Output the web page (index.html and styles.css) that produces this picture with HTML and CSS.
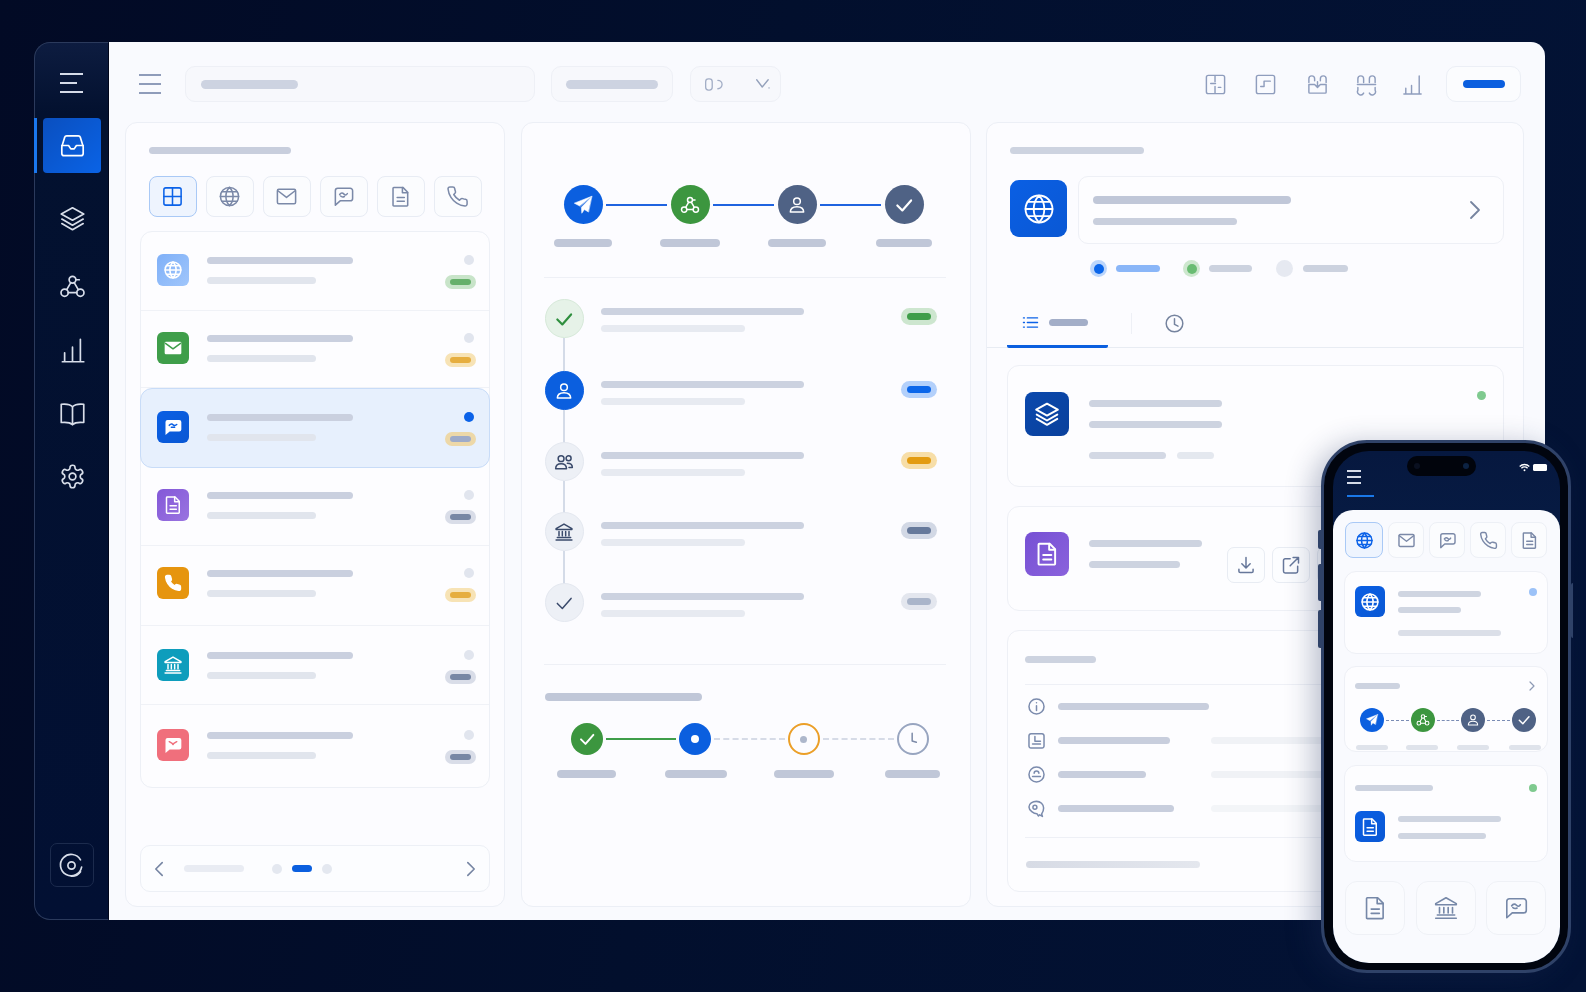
FILE: index.html
```html
<!DOCTYPE html>
<html lang="en">
<head>
  <meta charset="UTF-8" />
  <meta name="viewport" content="width=device-width, initial-scale=1.0" />
  <title>Inbox</title>
  <link rel="stylesheet" href="styles.css">
</head>
<body>

<svg class="sprite" xmlns="http://www.w3.org/2000/svg">
  <symbol id="i-inbox" viewBox="0 0 24 24"><path d="M2.500 13 5 4.800A2 2 0 0 1 7 3.500h10a2 2 0 0 1 2 1.300l2.500 8.200V19a2 2 0 0 1-2 2h-15a2 2 0 0 1-2-2z"/><path d="M2.500 12h6l2 3h3l2-3h6"/></symbol>
  <symbol id="i-layers" viewBox="0 0 24 24"><path d="M12 2.500 22 8l-10 5.500L2 8z"/><path d="M2.500 12.500 12 18l9.500-5.500"/><path d="M2.500 16.500 12 22l9.500-5.500"/></symbol>
  <symbol id="i-network" viewBox="0 0 24 24"><circle cx="12" cy="6" r="3"/><circle cx="5" cy="17.500" r="3.200"/><circle cx="19" cy="17.500" r="3.200"/><path d="M10.500 8.500 7 14.500M13.500 8.500l3.500 6M8.200 17.500h7.600M15 6h3"/></symbol>
  <symbol id="i-bars" viewBox="0 0 24 24"><path d="M3 22h19M5 22v-8M12 22V9M19 22V2"/></symbol>
  <symbol id="i-book" viewBox="0 0 24 24"><path d="M12 6C10 4 6.500 3.300 2 3.800V20c4.500-.5 8 .1 10 1.800 2-1.700 5.500-2.300 10-1.800V3.800C17.500 3.300 14 4 12 6z"/><path d="M12 6v15.800"/></symbol>
  <symbol id="i-gear" viewBox="0 0 24 24"><path d="M12.220 2h-.44a2 2 0 0 0-2 2v.18a2 2 0 0 1-1 1.730l-.43.250a2 2 0 0 1-2 0l-.15-.080a2 2 0 0 0-2.730.730l-.22.380a2 2 0 0 0 .73 2.730l.15.100a2 2 0 0 1 1 1.720v.510a2 2 0 0 1-1 1.740l-.15.090a2 2 0 0 0-.73 2.730l.22.380a2 2 0 0 0 2.730.730l.15-.080a2 2 0 0 1 2 0l.43.250a2 2 0 0 1 1 1.730V20a2 2 0 0 0 2 2h.44a2 2 0 0 0 2-2v-.18a2 2 0 0 1 1-1.730l.43-.250a2 2 0 0 1 2 0l.15.080a2 2 0 0 0 2.730-.730l.22-.390a2 2 0 0 0-.73-2.730l-.15-.080a2 2 0 0 1-1-1.740v-.5a2 2 0 0 1 1-1.740l.15-.090a2 2 0 0 0 .73-2.730l-.22-.380a2 2 0 0 0-2.730-.730l-.15.080a2 2 0 0 1-2 0l-.43-.250a2 2 0 0 1-1-1.730V4a2 2 0 0 0-2-2z"/><circle cx="12" cy="12" r="3"/></symbol>
  <symbol id="i-target" viewBox="0 0 24 24"><circle cx="12" cy="12" r="3.200"/><path d="M21 13.500A9.500 9.500 0 1 1 20 7"/><path d="M20 17.500a9.500 9.500 0 0 1-8 4"/></symbol>
  <symbol id="i-grid" viewBox="0 0 24 24"><rect x="3" y="3" width="18" height="18" rx="2"/><path d="M12 3v18M3 12h18"/></symbol>
  <symbol id="i-globe" viewBox="0 0 24 24"><circle cx="12" cy="12" r="9.500"/><path d="M2.500 12h19M12 2.500c-5 5-5 14 0 19M12 2.500c5 5 5 14 0 19M4 7h16M4 17h16"/></symbol>
  <symbol id="i-mail" viewBox="0 0 24 24"><rect x="2.500" y="4.500" width="19" height="15" rx="1.500"/><path d="M3 6l9 7 9-7"/></symbol>
  <symbol id="i-chat" viewBox="0 0 24 24"><path d="M6 3.500h13a2.500 2.500 0 0 1 2.500 2.500v8a2.500 2.500 0 0 1-2.500 2.500H8.500L3.500 21V6A2.500 2.500 0 0 1 6 3.500z"/><path d="M8 10c1.500-2 3-2 4.500-.5s2.500 1 3.500-.5M9 11.500c1 1 2.500 1.200 4 .5"/></symbol>
  <symbol id="i-doc" viewBox="0 0 24 24"><path d="M5 2.500h9.500l5 5V21a.8.8 0 0 1-.8.8H5a.8.8 0 0 1-.8-.8V3.300a.8.8 0 0 1 .8-.8z"/><path d="M14 2.500V8h5.500M8.500 13h7.500M8.500 17h7.500"/></symbol>
  <symbol id="i-phone" viewBox="0 0 24 24"><path d="M22 16.920v3a2 2 0 0 1-2.180 2 19.790 19.790 0 0 1-8.630-3.070 19.500 19.500 0 0 1-6-6 19.790 19.790 0 0 1-3.070-8.670A2 2 0 0 1 4.110 2h3a2 2 0 0 1 2 1.720c.13.960.37 1.900.7 2.810a2 2 0 0 1-.45 2.110L8.090 9.910a16 16 0 0 0 6 6l1.270-1.270a2 2 0 0 1 2.110-.45c.91.33 1.850.57 2.810.7A2 2 0 0 1 22 16.920z"/></symbol>
  <symbol id="i-bank" viewBox="0 0 24 24"><path d="M12 2.500 21.500 8v1h-19V8z"/><path d="M2.500 21.500h19M4 18.500h16M6 11.500v5M10 11.500v5M14 11.500v5M18 11.500v5"/></symbol>
  <symbol id="i-send" viewBox="0 0 24 24"><path d="M21.500 2.500 2.500 10l6 3.200z"/><path d="M21.500 3 10.200 14.500l.5 6.500 2.800-4 4.300 2.500z"/></symbol>
  <symbol id="i-user" viewBox="0 0 24 24"><circle cx="12" cy="7.500" r="4"/><path d="M4 20.500c0-5 3.500-6.500 8-6.500s8 1.500 8 6.500z"/></symbol>
  <symbol id="i-users" viewBox="0 0 24 24"><circle cx="8.500" cy="8" r="3.500"/><circle cx="17.500" cy="7.500" r="3"/><path d="M2 20c0-4 2.500-6 6.500-6s6.500 2 6.500 6zM16 13.500c3.500 0 6 1.500 6 5h-4"/></symbol>
  <symbol id="i-check" viewBox="0 0 24 24"><path d="M4 12.500 10 18.500 20.500 6.500"/></symbol>
  <symbol id="i-clock" viewBox="0 0 24 24"><circle cx="12" cy="12" r="9.500"/><path d="M12 6.500V13l4 2"/></symbol>
  <symbol id="i-hands" viewBox="0 0 24 24"><path d="M11 5v9.500l5 1.500"/></symbol>
  <symbol id="i-list" viewBox="0 0 24 24"><path d="M7.500 5.500H22M7.500 12H22M7.500 18.500H22M2 5.500h1.500M2 12h1.500M2 18.500h1.500"/></symbol>
  <symbol id="i-left" viewBox="0 0 12 20"><path d="M10 2 2 10l8 8"/></symbol>
  <symbol id="i-right" viewBox="0 0 12 20"><path d="M2 2l8 8-8 8"/></symbol>
  <symbol id="i-download" viewBox="0 0 24 24"><path d="M12 3v12M7 10.500l5 5 5-5M3.500 17v2.500a1.500 1.500 0 0 0 1.500 1.500h14a1.500 1.500 0 0 0 1.500-1.500V17"/></symbol>
  <symbol id="i-open" viewBox="0 0 24 24"><path d="M11 4.500H5A2 2 0 0 0 3 6.500v13a2 2 0 0 0 2 2h13a2 2 0 0 0 2-2v-6"/><path d="M14.500 3H21v6.500M21 3 11 13"/></symbol>
  <symbol id="i-panel" viewBox="0 0 24 24"><rect x="2.500" y="2.500" width="19" height="19" rx="2"/><path d="M11.500 3v6M7 11h5M11.500 14v7M15 15h2.500"/></symbol>
  <symbol id="i-frame" viewBox="0 0 24 24"><rect x="2.500" y="2.500" width="19" height="19" rx="2"/><path d="M7 14h3.500V8.500H17"/></symbol>
  <symbol id="i-tray" viewBox="0 0 24 24"><path d="M3 10V6a3 3 0 0 1 6 0v2M15 8V6a3 3 0 0 1 6 0v4M3 12v8a1 1 0 0 0 1 1h16a1 1 0 0 0 1-1v-8H15l-3 3-3-3zM12 9v5"/></symbol>
  <symbol id="i-links" viewBox="0 0 24 24"><path d="M3 10V6a3 3 0 0 1 6 0v4M15 10V6a3 3 0 0 1 6 0v4M2.500 12h19M3 15v3a3 3 0 0 0 6 3M15 21a3 3 0 0 0 6-3v-3"/></symbol>
  <symbol id="i-slim" viewBox="0 0 24 24"><path d="M3 22h18M5 22v-6M11 22v-9M19 22V3"/></symbol>
  <symbol id="i-zero" viewBox="0 0 24 16"><rect x="1.500" y="2" width="7" height="12" rx="3"/><path d="M14.500 3.500a4.500 4.500 0 1 1 0 9"/></symbol>
  <symbol id="i-chev" viewBox="0 0 20 14"><path d="M2 2l6.500 8.500L15.500 2"/><path d="M16.500 11.500v.1"/></symbol>
  <symbol id="i-info" viewBox="0 0 24 24"><circle cx="12" cy="12" r="9.500"/><path d="M12 11v6M12 7.200v.1"/></symbol>
  <symbol id="i-note" viewBox="0 0 24 24"><path d="M5 3.500h14a2.500 2.500 0 0 1 2.500 2.500v13a2.500 2.500 0 0 1-2.500 2.500H5A2.500 2.500 0 0 1 2.500 19V6A2.500 2.500 0 0 1 5 3.500z"/><path d="M7 16.500h10M10 7v6h7"/></symbol>
  <symbol id="i-face" viewBox="0 0 24 24"><circle cx="12" cy="12" r="9.500"/><path d="M7 14.500h10M9 10.500a3 3 0 0 1 6 0"/></symbol>
  <symbol id="i-tag" viewBox="0 0 24 24"><path d="M12 3c5 0 9 3.500 9 8.500 0 3-1 5.500-2.500 7.500l1 3-3.500-2-1.500 1.500-2-3c-4 0-10-4-10-8.500C2.500 6 7 3 12 3z"/><circle cx="10" cy="10.500" r="2.500"/></symbol>
</svg>

<div class="app">
  <aside class="sidebar">
    <div class="side-burger"><i></i><i class="short"></i><i></i></div>
    <nav class="side-nav">
      <a class="side-item active"><svg class="ico ico-side"><use href="#i-inbox"/></svg></a>
      <a class="side-item item-layers"><svg class="ico ico-side"><use href="#i-layers"/></svg></a>
      <a class="side-item item-net"><svg class="ico ico-side"><use href="#i-network"/></svg></a>
      <a class="side-item item-bars"><svg class="ico ico-side"><use href="#i-bars"/></svg></a>
      <a class="side-item item-book"><svg class="ico ico-side"><use href="#i-book"/></svg></a>
      <a class="side-item item-gear"><svg class="ico ico-side"><use href="#i-gear"/></svg></a>
    </nav>
    <div class="side-bottom"><svg class="ico ico-side"><use href="#i-target"/></svg></div>
  </aside>

  <main class="main">
    <header class="topbar">
      <div class="burger"><i></i><i></i><i></i></div>
      <div class="field field-search"><span class="bar bar-top"></span></div>
      <div class="field field-filter"><span class="bar bar-filter"></span></div>
      <div class="field field-select">
        <svg class="ico ico-zero"><use href="#i-zero"/></svg>
        <svg class="ico ico-chev"><use href="#i-chev"/></svg>
      </div>
      <div class="top-icons">
        <svg class="ico ico-top"><use href="#i-panel"/></svg>
        <svg class="ico ico-top"><use href="#i-frame"/></svg>
        <svg class="ico ico-top"><use href="#i-tray"/></svg>
        <svg class="ico ico-top"><use href="#i-links"/></svg>
        <svg class="ico ico-top"><use href="#i-slim"/></svg>
      </div>
      <div class="top-action"><span class="bar bar-action"></span></div>
    </header>

    <div class="columns">
      <section class="panel panel-list">
        <span class="bar bar-heading"></span>
        <div class="type-tabs">
          <div class="type-tab active"><svg class="ico ico-tab"><use href="#i-grid"/></svg></div>
          <div class="type-tab"><svg class="ico ico-tab"><use href="#i-globe"/></svg></div>
          <div class="type-tab"><svg class="ico ico-tab"><use href="#i-mail"/></svg></div>
          <div class="type-tab"><svg class="ico ico-tab"><use href="#i-chat"/></svg></div>
          <div class="type-tab"><svg class="ico ico-tab"><use href="#i-doc"/></svg></div>
          <div class="type-tab"><svg class="ico ico-tab"><use href="#i-phone"/></svg></div>
        </div>

        <div class="list">
          <div class="row row-first">
            <div class="tile tile-sky"><svg class="ico ico-20"><use href="#i-globe"/></svg></div>
            <div class="row-text"><span class="bar row-title"></span><span class="bar row-sub"></span></div>
            <div class="row-meta"><span class="dot"></span><span class="badge badge-green"><i></i></span></div>
          </div>
          <div class="row row-short">
            <div class="tile tile-green">
              <svg class="tile-glyph" viewBox="0 0 24 24"><rect class="glyph-body" x="2" y="4.500" width="20" height="15" rx="1.500"/><path class="glyph-mark mark-green" d="M3 6.500l9 6.500 9-6.500"/></svg>
            </div>
            <div class="row-text"><span class="bar row-title"></span><span class="bar row-sub"></span></div>
            <div class="row-meta"><span class="dot"></span><span class="badge badge-amber"><i></i></span></div>
          </div>
          <div class="row row-selected">
            <div class="tile tile-blue">
              <svg class="tile-glyph" viewBox="0 0 24 24"><path class="glyph-body" d="M5.500 3.500h14A2.500 2.500 0 0 1 22 6v9a2.500 2.500 0 0 1-2.500 2.500H8L3 21.500V6a2.500 2.500 0 0 1 2.500-2.500z"/><path class="glyph-mark mark-blue" d="M7.500 10c2-2 3.500-2 4.500-.8s3 1.200 4.500-.2M10 12.300h4"/></svg>
            </div>
            <div class="row-text"><span class="bar row-title"></span><span class="bar row-sub"></span></div>
            <div class="row-meta"><span class="dot dot-on"></span><span class="badge badge-mixed"><i></i></span></div>
          </div>
          <div class="row">
            <div class="tile tile-purple"><svg class="ico ico-20"><use href="#i-doc"/></svg></div>
            <div class="row-text"><span class="bar row-title"></span><span class="bar row-sub"></span></div>
            <div class="row-meta"><span class="dot"></span><span class="badge badge-slate"><i></i></span></div>
          </div>
          <div class="row row-wide">
            <div class="tile tile-orange"><svg class="ico ico-18 ico-solid"><use href="#i-phone"/></svg></div>
            <div class="row-text"><span class="bar row-title"></span><span class="bar row-sub"></span></div>
            <div class="row-meta"><span class="dot"></span><span class="badge badge-amber"><i></i></span></div>
          </div>
          <div class="row row-low">
            <div class="tile tile-teal"><svg class="ico ico-20"><use href="#i-bank"/></svg></div>
            <div class="row-text"><span class="bar row-title"></span><span class="bar row-sub"></span></div>
            <div class="row-meta"><span class="dot"></span><span class="badge badge-slate"><i></i></span></div>
          </div>
          <div class="row row-low row-last">
            <div class="tile tile-red">
              <svg class="tile-glyph" viewBox="0 0 24 24"><path class="glyph-body" d="M5.500 3.500h14A2.500 2.500 0 0 1 22 6v9a2.500 2.500 0 0 1-2.500 2.500H8L3 21.500V6a2.500 2.500 0 0 1 2.500-2.500z"/><path class="glyph-mark mark-red" d="M7.500 8l3.500 2 1 1.500 1-1.500 3.500-2"/></svg>
            </div>
            <div class="row-text"><span class="bar row-title"></span><span class="bar row-sub"></span></div>
            <div class="row-meta"><span class="dot"></span><span class="badge badge-slate"><i></i></span></div>
          </div>
        </div>

        <div class="pager">
          <svg class="ico ico-chevron"><use href="#i-left"/></svg>
          <span class="bar pager-label"></span>
          <span class="pager-dot first"></span>
          <span class="pager-pill"></span>
          <span class="pager-dot"></span>
          <svg class="ico ico-chevron pager-next"><use href="#i-right"/></svg>
        </div>
      </section>

      <section class="panel panel-flow">
        <div class="steps">
          <div class="step-dot dot-blue"><svg class="ico ico-22 ico-plane"><use href="#i-send"/></svg></div>
          <span class="step-line"></span>
          <div class="step-dot dot-green"><svg class="ico ico-20"><use href="#i-network"/></svg></div>
          <span class="step-line"></span>
          <div class="step-dot dot-slate"><svg class="ico ico-20"><use href="#i-user"/></svg></div>
          <span class="step-line"></span>
          <div class="step-dot dot-slate"><svg class="ico ico-20 ico-bold"><use href="#i-check"/></svg></div>
        </div>
        <div class="step-labels">
          <span class="bar label-a"></span><span class="bar label-b"></span><span class="bar label-a"></span><span class="bar label-c"></span>
        </div>
        <hr class="rule rule-steps">

        <div class="timeline">
          <div class="event">
            <div class="event-dot ev-done"><svg class="ico ico-20 ico-bold"><use href="#i-check"/></svg></div>
            <div class="event-text"><span class="bar event-title"></span><span class="bar event-sub"></span></div>
            <span class="badge badge-lg badge-green-lg"><i></i></span>
          </div>
          <div class="event">
            <div class="event-dot ev-active"><svg class="ico ico-20"><use href="#i-user"/></svg></div>
            <div class="event-text"><span class="bar event-title"></span><span class="bar event-sub"></span></div>
            <span class="badge badge-lg badge-blue-lg"><i></i></span>
          </div>
          <div class="event">
            <div class="event-dot"><svg class="ico ico-20"><use href="#i-users"/></svg></div>
            <div class="event-text"><span class="bar event-title"></span><span class="bar event-sub"></span></div>
            <span class="badge badge-lg badge-amber-lg"><i></i></span>
          </div>
          <div class="event">
            <div class="event-dot"><svg class="ico ico-20"><use href="#i-bank"/></svg></div>
            <div class="event-text"><span class="bar event-title"></span><span class="bar event-sub"></span></div>
            <span class="badge badge-lg badge-slate-lg"><i></i></span>
          </div>
          <div class="event">
            <div class="event-dot"><svg class="ico ico-20"><use href="#i-check"/></svg></div>
            <div class="event-text"><span class="bar event-title"></span><span class="bar event-sub"></span></div>
            <span class="badge badge-lg badge-grey-lg"><i></i></span>
          </div>
        </div>
        <hr class="rule rule-progress">

        <span class="bar progress-title"></span>
        <div class="progress">
          <div class="prog-dot prog-done"><svg class="ico ico-18 ico-bold"><use href="#i-check"/></svg></div>
          <span class="prog-line prog-line-green"></span>
          <div class="prog-dot prog-now"><i></i></div>
          <span class="prog-line"></span>
          <div class="prog-dot prog-next"><i></i></div>
          <span class="prog-line"></span>
          <div class="prog-dot prog-wait"><svg class="ico ico-20"><use href="#i-hands"/></svg></div>
        </div>
        <div class="prog-labels">
          <span class="bar label-d"></span><span class="bar label-e"></span><span class="bar label-f"></span><span class="bar label-g"></span>
        </div>
      </section>

      <section class="panel panel-detail">
        <span class="bar detail-title"></span>
        <div class="detail-head">
          <div class="tile tile-xl tile-blue"><svg class="ico ico-34"><use href="#i-globe"/></svg></div>
          <div class="head-card">
            <div><span class="bar head-title"></span><span class="bar head-sub"></span></div>
            <svg class="ico head-chevron"><use href="#i-right"/></svg>
          </div>
        </div>
        <div class="legend">
          <span class="radio radio-blue"></span><span class="bar legend-bar legend-on"></span>
          <span class="radio radio-green"></span><span class="bar legend-bar"></span>
          <span class="radio radio-off"></span><span class="bar legend-bar legend-long"></span>
        </div>

        <div class="detail-tabs">
          <div class="detail-tab"><svg class="ico ico-list"><use href="#i-list"/></svg><span class="bar tab-label"></span></div>
          <span class="tab-sep"></span>
          <svg class="ico ico-clock"><use href="#i-clock"/></svg>
        </div>

        <div class="detail-body">
          <article class="card card-stack">
            <div class="tile tile-lg tile-navy"><svg class="ico ico-26"><use href="#i-layers"/></svg></div>
            <div class="stack-text">
              <span class="bar stack-line"></span><span class="bar stack-line"></span>
              <div class="stack-foot"><span class="bar foot-a"></span><span class="bar foot-b"></span></div>
            </div>
            <span class="status-dot"></span>
          </article>

          <article class="card card-file">
            <div class="tile tile-lg tile-violet"><svg class="ico ico-26"><use href="#i-doc"/></svg></div>
            <div class="file-text"><span class="bar file-name"></span><span class="bar file-size"></span></div>
            <div class="file-actions">
              <div class="tool"><svg class="ico ico-20"><use href="#i-download"/></svg></div>
              <div class="tool"><svg class="ico ico-20"><use href="#i-open"/></svg></div>
              <div class="tool"></div>
            </div>
          </article>

          <article class="card card-info">
            <span class="bar info-title"></span>
            <hr class="rule rule-info">
            <div class="info-row"><svg class="ico ico-19"><use href="#i-info"/></svg><span class="bar info-a"></span></div>
            <div class="info-row"><svg class="ico ico-19"><use href="#i-note"/></svg><span class="bar info-b"></span><span class="bar info-side"></span></div>
            <div class="info-row"><svg class="ico ico-19"><use href="#i-face"/></svg><span class="bar info-c"></span><span class="bar info-side"></span></div>
            <div class="info-row"><svg class="ico ico-19"><use href="#i-tag"/></svg><span class="bar info-d"></span><span class="bar info-side info-faint"></span></div>
            <hr class="rule rule-foot">
            <span class="bar info-foot"></span>
          </article>
        </div>
      </section>
    </div>
  </main>
</div>

<div class="phone">
  <span class="phone-key key-a"></span>
  <span class="phone-key key-b"></span>
  <span class="phone-key key-c"></span>
  <span class="phone-key key-power"></span>
  <div class="screen">
    <div class="island"><i></i><i class="lens"></i></div>
    <div class="status">
      <svg class="wifi" viewBox="0 0 16 12"><path d="M1 4.500a10 10 0 0 1 14 0M3.500 7a6.500 6.500 0 0 1 9 0"/><circle cx="8" cy="10" r="1.400"/></svg>
      <span class="battery"></span>
    </div>
    <div class="screen-head">
      <div class="phone-burger"><i></i><i></i><i></i></div>
      <span class="phone-underline"></span>
    </div>
    <div class="sheet">
      <div class="phone-tabs">
        <div class="phone-tab active"><svg class="ico ico-19"><use href="#i-globe"/></svg></div>
        <div class="phone-tab"><svg class="ico ico-19"><use href="#i-mail"/></svg></div>
        <div class="phone-tab"><svg class="ico ico-19"><use href="#i-chat"/></svg></div>
        <div class="phone-tab"><svg class="ico ico-19"><use href="#i-phone"/></svg></div>
        <div class="phone-tab"><svg class="ico ico-19"><use href="#i-doc"/></svg></div>
      </div>

      <div class="phone-card pc-first">
        <div class="tile tile-md tile-blue"><svg class="ico ico-20"><use href="#i-globe"/></svg></div>
        <div class="pc-text">
          <span class="bar pc-a"></span><span class="bar pc-b"></span><span class="bar pc-c"></span>
        </div>
        <span class="pc-dot pc-dot-blue"></span>
      </div>

      <div class="phone-card pc-steps">
        <div class="pc-head"><span class="bar pc-title"></span><svg class="ico pc-chevron"><use href="#i-right"/></svg></div>
        <div class="pc-steprow">
          <div class="mini-dot dot-blue"><svg class="ico ico-14 ico-plane"><use href="#i-send"/></svg></div>
          <span class="mini-line"></span>
          <div class="mini-dot dot-green"><svg class="ico ico-14"><use href="#i-network"/></svg></div>
          <span class="mini-line"></span>
          <div class="mini-dot dot-slate"><svg class="ico ico-14"><use href="#i-user"/></svg></div>
          <span class="mini-line"></span>
          <div class="mini-dot dot-slate"><svg class="ico ico-14 ico-bold"><use href="#i-check"/></svg></div>
        </div>
        <div class="mini-labels"><span class="bar"></span><span class="bar"></span><span class="bar"></span><span class="bar"></span></div>
      </div>

      <div class="phone-card pc-file">
        <div class="pc-head"><span class="bar pc-title-long"></span><span class="pc-dot pc-dot-green"></span></div>
        <div class="pc-filerow">
          <div class="tile tile-md tile-blue"><svg class="ico ico-20"><use href="#i-doc"/></svg></div>
          <div class="pc-text"><span class="bar pc-c"></span><span class="bar pc-d"></span></div>
        </div>
      </div>

      <div class="phone-tiles">
        <div class="phone-tile"><svg class="ico ico-26"><use href="#i-doc"/></svg></div>
        <div class="phone-tile"><svg class="ico ico-26"><use href="#i-bank"/></svg></div>
        <div class="phone-tile"><svg class="ico ico-26"><use href="#i-chat"/></svg></div>
      </div>
    </div>
  </div>
</div>

</body>
</html>
```

FILE: styles.css
```css
* {
  box-sizing: border-box;
}

body {
  margin: 0;
  width: 1586px;
  height: 992px;
  overflow: hidden;
  position: relative;
  padding: 42px 0 0 34px;
  background: linear-gradient(100deg, #020a25 0%, #020f2d 45%, #031336 100%);
}

.sprite {
  display: none;
}

.ico {
  display: block;
  flex: none;
  fill: none;
  stroke: currentColor;
  stroke-width: 1.8;
  stroke-linecap: round;
  stroke-linejoin: round;
}

.ico-14 { width: 14px; height: 14px; }
.ico-18 { width: 18px; height: 18px; }
.ico-19 { width: 19px; height: 19px; }
.ico-20 { width: 20px; height: 20px; }
.ico-22 { width: 22px; height: 22px; }
.ico-26 { width: 26px; height: 26px; }
.ico-34 { width: 34px; height: 34px; stroke-width: 1.3; }
.ico-side { width: 27px; height: 27px; stroke-width: 1.5; }
.ico-solid { fill: currentColor; }
.ico-plane { fill: currentColor; stroke-width: 0.6; }
.ico-bold { stroke-width: 2.6; }

.bar {
  display: block;
  height: 7px;
  border-radius: 4px;
  background: #cdd3e1;
}

/* app frame */

.app {
  display: flex;
  width: 1511px;
  height: 878px;
}

.sidebar {
  width: 75px;
  flex: none;
  display: flex;
  flex-direction: column;
  align-items: center;
  background: linear-gradient(to bottom, #0d1c40 0, #03112f 70px, #021033 100%);
  border: 1px solid #2b3a5c;
  border-right: 1px solid #01061a;
  border-radius: 16px 0 0 16px;
}

.side-burger {
  margin-top: 30px;
  width: 23px;
  display: flex;
  flex-direction: column;
  gap: 7px;
}

.side-burger i {
  display: block;
  height: 2px;
  background: #d5dbe8;
}

.side-burger .short {
  width: 17px;
}

.side-nav {
  margin-top: 25px;
  width: 100%;
  display: flex;
  flex-direction: column;
  align-items: center;
  color: #d8deea;
}

.side-item {
  display: flex;
  align-items: center;
  justify-content: center;
  width: 58px;
  height: 24px;
  margin-left: 1px;
}

.side-item.active {
  height: 55px;
  border-radius: 4px;
  color: #fff;
  background: linear-gradient(135deg, #0a4fbf, #0a63e6);
  position: relative;
}

.side-item.active::before {
  content: "";
  position: absolute;
  left: -9px;
  top: 0;
  bottom: 0;
  width: 3px;
  background: #1a78f0;
}

.item-layers { margin-top: 33px; }
.item-net { margin-top: 44px; }
.item-bars { margin-top: 40px; }
.item-book { margin-top: 39px; }
.item-gear { margin-top: 39px; }

.side-bottom {
  margin-top: auto;
  margin-bottom: 32px;
  width: 44px;
  height: 44px;
  border: 1px solid #1c2b4d;
  border-radius: 7px;
  display: flex;
  align-items: center;
  justify-content: center;
  color: #d8deea;
}

.main {
  flex: 1;
  display: flex;
  flex-direction: column;
  background: #f9fafe;
  border-radius: 0 14px 0 0;
  padding: 24px 21px 13px 16px;
}

/* top bar */

.topbar {
  display: flex;
  align-items: center;
  height: 36px;
  flex: none;
}

.burger {
  width: 22px;
  margin-left: 14px;
  display: flex;
  flex-direction: column;
  gap: 7px;
}

.burger i {
  display: block;
  height: 2px;
  background: #8f9cba;
}

.field {
  height: 36px;
  border: 1px solid #eef0f6;
  border-radius: 10px;
  background: #f7f8fc;
  display: flex;
  align-items: center;
}

.field-search {
  width: 350px;
  margin-left: 24px;
  padding-left: 15px;
}

.field-filter {
  width: 122px;
  margin-left: 16px;
  padding-left: 14px;
}

.field-select {
  width: 91px;
  margin-left: 17px;
  padding-left: 13px;
  color: #a3aec6;
}

.bar-top { width: 97px; height: 9px; border-radius: 5px; }
.bar-filter { width: 92px; height: 9px; border-radius: 5px; }
.bar-action { width: 42px; height: 8px; background: #0b5fdf; }

.ico-zero { width: 23px; height: 15px; stroke-width: 1.4; }
.ico-chev { width: 17px; height: 12px; margin-left: 28px; stroke-width: 1.6; color: #94a1bb; }

.top-icons {
  margin-left: auto;
  display: flex;
  align-items: center;
  color: #8f9dbd;
}

.ico-top {
  width: 23px;
  height: 23px;
  margin-right: 27px;
  stroke-width: 1.5;
}

.top-icons .ico-top:nth-child(2) { margin-right: 29px; }
.top-icons .ico-top:nth-child(3) { margin-right: 26px; }
.top-icons .ico-top:nth-child(4) { margin-right: 23px; }
.top-icons .ico-top:last-child { margin-right: 22px; }

.top-action {
  width: 75px;
  height: 36px;
  margin-right: 3px;
  border: 1px solid #eceff6;
  border-radius: 10px;
  background: #fbfcfe;
  display: flex;
  align-items: center;
  justify-content: center;
}

/* columns */

.columns {
  flex: 1;
  margin-top: 20px;
  display: grid;
  grid-template-columns: 380px 450px 538px;
  column-gap: 15.5px;
  min-height: 0;
}

.panel {
  background: #fcfcff;
  border: 1px solid #eceff6;
  border-radius: 12px;
  min-width: 0;
}

.panel-list {
  padding: 24px 14px 14px 14px;
  display: flex;
  flex-direction: column;
}

.bar-heading {
  width: 142px;
  margin-left: 9px;
  background: #c8cedd;
}

.type-tabs {
  margin: 22px 0 0 9px;
  display: flex;
  gap: 9.5px;
}

.type-tab {
  width: 47.5px;
  height: 41px;
  border: 1px solid #e8ecf4;
  border-radius: 8px;
  background: #fbfcfe;
  color: #7b89a8;
  display: flex;
  align-items: center;
  justify-content: center;
}

.type-tab.active {
  background: #eef4fe;
  border-color: #a9c9f6;
  color: #0b62e8;
}

.ico-tab {
  width: 23px;
  height: 23px;
  stroke-width: 1.6;
}

.list {
  margin-top: 14px;
  border: 1px solid #edf0f6;
  border-radius: 12px;
  background: #fdfdff;
}

.row {
  height: 78px;
  padding: 21px 13px 0 16px;
  display: flex;
  align-items: flex-start;
  border-bottom: 1px solid #f0f2f7;
}

.row-first { height: 79px; padding-top: 22px; }
.row-short { height: 77px; }
.row-wide { height: 80px; }
.row-low { height: 79px; padding-top: 23px; }

.row-selected {
  height: 80px;
  margin: 0 -1px;
  padding-top: 22px;
  background: #e7f0fd;
  border: 1px solid #c8dcf8;
  border-radius: 12px;
}

.row-last {
  height: 82px;
  padding-top: 24px;
  border-bottom: 0;
}

.tile {
  width: 32px;
  height: 32px;
  flex: none;
  border-radius: 6px;
  display: flex;
  align-items: center;
  justify-content: center;
  color: #fff;
}

.tile-sky { background: linear-gradient(135deg, #7fb0f8, #a0c6fb); }
.tile-green { background: #3f9e4a; }
.tile-blue { background: linear-gradient(135deg, #0a5fe4, #0a58d4); }
.tile-purple { background: linear-gradient(135deg, #8358d8, #9a74e0); }
.tile-orange { background: #e6950f; }
.tile-teal { background: #0e9dbc; }
.tile-red { background: #f06f7c; }

.tile-glyph {
  width: 20px;
  height: 20px;
  display: block;
}

.glyph-body { fill: #fff; }
.glyph-mark { fill: none; stroke-width: 1.8; stroke-linecap: round; stroke-linejoin: round; }
.mark-green { stroke: #3f9e4a; }
.mark-blue { stroke: #0a5fe4; }
.mark-red { stroke: #f06f7c; }

.row-text {
  flex: 1;
  padding: 3px 0 0 18px;
}

.row-title { width: 146px; background: #cad0df; }
.row-sub { width: 109px; margin-top: 13px; background: #e1e5ed; }

.row-meta {
  width: 31px;
  display: flex;
  flex-direction: column;
  align-items: flex-end;
}

.dot {
  width: 10px;
  height: 10px;
  margin: 1px 2px 0 0;
  border-radius: 50%;
  background: #e1e5ee;
}

.dot-on {
  background: #0b62e8;
}

.badge {
  margin-top: 10px;
  width: 31px;
  height: 14px;
  border-radius: 7px;
  display: flex;
  align-items: center;
  justify-content: center;
}

.badge i {
  display: block;
  width: 21px;
  height: 6px;
  border-radius: 3px;
}

.badge-green { background: #c8e4c9; }
.badge-green i { background: #66b06b; }
.badge-amber { background: #f7e3b5; }
.badge-amber i { background: #e6ae3f; }
.badge-mixed { background: #edd8a8; }
.badge-mixed i { background: #9eabc9; }
.badge-slate { background: #d9dde8; }
.badge-slate i { background: #7787a4; }

.pager {
  margin-top: auto;
  height: 47px;
  border: 1px solid #edf0f6;
  border-radius: 10px;
  background: #fcfdff;
  display: flex;
  align-items: center;
  padding: 0 13px;
}

.ico-chevron {
  width: 10px;
  height: 16px;
  color: #7685a3;
  stroke-width: 2;
}

.pager-label {
  width: 60px;
  margin-left: 20px;
  background: #e9ecf3;
}

.pager-dot {
  width: 10px;
  height: 10px;
  border-radius: 50%;
  background: #e4e8f0;
}

.pager-dot.first {
  margin: 0 10px 0 28px;
}

.pager-pill {
  width: 20px;
  height: 7px;
  border-radius: 4px;
  background: #0b5fdf;
  margin-right: 10px;
}

.pager-next {
  margin-left: auto;
}

/* middle column */

.panel-flow {
  padding: 62px 24px 0 22px;
}

.steps {
  margin-left: 20px;
  width: 360px;
  display: flex;
  align-items: center;
}

.step-dot {
  width: 39px;
  height: 39px;
  flex: none;
  border-radius: 50%;
  display: flex;
  align-items: center;
  justify-content: center;
  color: #fff;
}

.dot-blue { background: #0b5fdf; }
.dot-green { background: #3c963f; }
.dot-slate { background: #4f6285; }

.step-line {
  flex: 1;
  height: 2px;
  margin: 0 3.5px;
  background: #1f63e0;
}

.step-labels {
  margin: 15px 0 0 -14px;
  width: 428px;
  display: grid;
  grid-template-columns: repeat(4, 107px);
  justify-items: center;
}

.step-labels .bar {
  height: 8px;
  background: #c0c7d8;
}

.label-a { width: 58px; }
.label-b { width: 60px; }
.label-c { width: 56px; }

.rule {
  display: block;
  border: 0;
  height: 1px;
  margin: 0;
  background: #eef0f6;
}

.rule-steps { margin-top: 30px; }

.timeline {
  margin-top: 21px;
}

.event {
  height: 71px;
  display: flex;
  align-items: flex-start;
  padding-left: 1px;
}

.event:nth-child(1) { height: 72px; }
.event:nth-child(3) { height: 70px; }

.event-dot {
  width: 39px;
  height: 39px;
  flex: none;
  border-radius: 50%;
  background: #edf0f6;
  border: 1px solid #e4e8f0;
  color: #3a4a6b;
  display: flex;
  align-items: center;
  justify-content: center;
  position: relative;
}

.event:not(:last-child) .event-dot::after {
  content: "";
  position: absolute;
  left: 17.5px;
  top: 38px;
  width: 2px;
  height: 33px;
  background: #d4dbe8;
}

.ev-done { background: #e6f2e8; border-color: #d6e9d9; color: #2f8f3e; }
.ev-active { background: #0b5fdf; border-color: #0b5fdf; color: #fff; }

.event-text {
  flex: 1;
  padding: 10px 0 0 17px;
}

.event:first-child .event-text {
  padding-top: 9px;
}

.event-title { width: 203px; background: #ccd2e0; }
.event-sub { width: 144px; margin-top: 10px; background: #e7eaf1; }

.badge-lg {
  width: 36px;
  height: 17px;
  margin: 10px 9px 0 0;
  border-radius: 9px;
}

.event:first-child .badge-lg {
  margin-top: 9px;
}

.badge-lg i {
  width: 24px;
  height: 7px;
  border-radius: 4px;
}

.badge-green-lg { background: #cde6cf; }
.badge-green-lg i { background: #3f9e4a; }
.badge-blue-lg { background: #b3d0fb; }
.badge-blue-lg i { background: #0b66ea; }
.badge-amber-lg { background: #f7dea8; }
.badge-amber-lg i { background: #e39b10; }
.badge-slate-lg { background: #d2d8e5; }
.badge-slate-lg i { background: #66799b; }
.badge-grey-lg { background: #e3e6ee; }
.badge-grey-lg i { background: #aab5ca; }

.rule-progress { margin-top: 10px; }

.progress-title {
  margin: 28px 0 0 1px;
  width: 157px;
  height: 8px;
  background: #c0c7d8;
}

.progress {
  margin: 22px 0 0 27px;
  width: 358px;
  display: flex;
  align-items: center;
}

.prog-dot {
  width: 32px;
  height: 32px;
  flex: none;
  border-radius: 50%;
  display: flex;
  align-items: center;
  justify-content: center;
}

.prog-done { background: #3c963f; color: #fff; }
.prog-now { background: #0b5fdf; }
.prog-now i { width: 8px; height: 8px; border-radius: 50%; background: #fff; }
.prog-next { border: 2px solid #eb9f28; }
.prog-next i { width: 7px; height: 7px; border-radius: 50%; background: #adb7cb; }
.prog-wait { border: 2px solid #98a5c0; color: #7d8ba8; }

.prog-line {
  flex: 1;
  height: 0;
  margin: 0 3px;
  border-top: 2px dashed #d6dbe7;
}

.prog-line-green {
  border-top: 2px solid #3f9e4a;
}

.prog-labels {
  margin: 15px 0 0 -11px;
  width: 435px;
  display: grid;
  grid-template-columns: repeat(4, 108.7px);
  justify-items: center;
}

.prog-labels .bar {
  height: 8px;
  background: #c0c7d8;
}

.label-d { width: 59px; }
.label-e { width: 62px; }
.label-f { width: 60px; }
.label-g { width: 55px; }

/* right column */

.panel-detail {
  padding-top: 24px;
}

.detail-title {
  width: 134px;
  margin-left: 23px;
  background: #cdd3e0;
}

.detail-head {
  margin: 22px 19px 0 23px;
  display: flex;
  align-items: flex-start;
  gap: 11px;
}

.tile-xl {
  width: 57px;
  height: 57px;
  margin-top: 4px;
  border-radius: 9px;
}

.head-card {
  flex: 1;
  height: 68px;
  border: 1px solid #eef0f6;
  border-radius: 10px;
  background: #fdfdff;
  padding: 0 22px 0 14px;
  display: flex;
  align-items: center;
  justify-content: space-between;
}

.head-title { width: 198px; height: 8px; background: #c0c7d8; }
.head-sub { width: 144px; margin-top: 14px; background: #c9cfdd; }

.head-chevron {
  width: 12px;
  height: 20px;
  color: #76849f;
  stroke-width: 1.8;
}

.legend {
  margin: 16px 0 0 103px;
  height: 17px;
  display: flex;
  align-items: center;
}

.radio {
  width: 17px;
  height: 17px;
  flex: none;
  border-radius: 50%;
  display: flex;
  align-items: center;
  justify-content: center;
}

.radio::after {
  content: "";
  width: 10px;
  height: 10px;
  border-radius: 50%;
}

.radio-blue { background: #bcd6fb; }
.radio-blue::after { background: #0b66ea; }
.radio-green { background: #cde7ce; margin-left: 23px; }
.radio-green::after { background: #69bc72; }
.radio-off { background: #e6e9f1; margin-left: 24px; }

.legend-bar {
  width: 43px;
  margin-left: 9px;
  background: #ccd2df;
}

.legend-on { width: 44px; background: #8ab6f8; }
.legend-long { width: 45px; margin-left: 10px; }

.detail-tabs {
  margin-top: 25px;
  height: 46px;
  border-bottom: 1px solid #e8ecf3;
  padding: 0 0 2px 20px;
  display: flex;
  align-items: center;
}

.detail-tab {
  width: 101px;
  height: 46px;
  margin-bottom: -3px;
  border-bottom: 3px solid #0b5fdf;
  padding: 0 0 3px 15px;
  display: flex;
  align-items: center;
  gap: 10px;
  border-radius: 0 0 2px 2px;
}

.ico-list { width: 17px; height: 17px; color: #0b62e8; }
.tab-label { width: 39px; background: #a3aec8; }

.tab-sep {
  width: 1px;
  height: 21px;
  margin-left: 23px;
  background: #eef0f6;
}

.ico-clock {
  width: 21px;
  height: 21px;
  margin-left: 32px;
  color: #76849f;
  stroke-width: 1.7;
}

.detail-body {
  padding: 17px 19px 0 20px;
  display: flex;
  flex-direction: column;
  gap: 19px;
}

.card {
  background: #fdfdff;
  border: 1px solid #eef0f6;
  border-radius: 12px;
}

.card-stack {
  height: 122px;
  padding: 26px 17px 0 17px;
  display: flex;
  align-items: flex-start;
}

.tile-lg {
  width: 44px;
  height: 44px;
  border-radius: 8px;
}

.tile-navy { background: linear-gradient(135deg, #0a48ad, #0a419c); }
.tile-violet { background: linear-gradient(135deg, #7650d4, #8a62dc); }

.stack-text {
  flex: 1;
  padding: 8px 0 0 20px;
}

.stack-line {
  width: 133px;
  background: #cdd3e0;
}

.stack-line + .stack-line {
  margin-top: 14px;
}

.stack-foot {
  margin-top: 24px;
  display: flex;
  gap: 11px;
}

.foot-a { width: 77px; background: #d3d8e4; }
.foot-b { width: 37px; background: #e4e8ef; }

.status-dot {
  width: 9px;
  height: 9px;
  margin-top: -1px;
  border-radius: 50%;
  background: #7fca8f;
}

.card-file {
  height: 105px;
  padding: 25px 0 0 17px;
  display: flex;
  align-items: flex-start;
}

.file-text {
  width: 158px;
  padding: 8px 0 0 20px;
}

.file-name { width: 113px; background: #cdd3e0; }
.file-size { width: 91px; margin-top: 14px; background: #cdd3e0; }

.file-actions {
  margin-top: 15px;
  display: flex;
  gap: 7px;
}

.tool {
  width: 38px;
  height: 36px;
  border: 1px solid #e8ecf3;
  border-radius: 7px;
  background: #fcfdff;
  color: #66779a;
  display: flex;
  align-items: center;
  justify-content: center;
}

.card-info {
  height: 262px;
  padding: 25px 0 0 17px;
}

.info-title {
  width: 71px;
  background: #cdd3e0;
}

.rule-info {
  margin: 21px 0 4px;
}

.info-row {
  height: 34px;
  display: flex;
  align-items: center;
  color: #7b8bad;
}

.info-row .ico {
  margin-left: 2px;
  stroke-width: 1.9;
}

.info-row .bar:first-of-type {
  margin-left: 12px;
  background: #c8cedd;
}

.info-a { width: 151px; }
.info-b { width: 112px; }
.info-c { width: 88px; }
.info-d { width: 116px; }

.info-side {
  flex: 1;
  margin-right: 16px;
  background: #f0f2f6;
}

.info-b + .info-side { margin-left: 41px; }
.info-c + .info-side { margin-left: 65px; }
.info-d + .info-side { margin-left: 37px; }
.info-faint { background: #f3f5f8; }

.rule-foot {
  margin-top: 12px;
}

.info-foot {
  margin: 23px 0 0 1px;
  width: 174px;
  background: linear-gradient(to right, #d7dbe5, #e4e7ee);
}

/* phone, sits over the window */

.phone {
  position: absolute;
  left: 1321px;
  top: 440px;
  width: 250px;
  height: 533px;
  padding: 8px 8px 7px 9px;
  border: 3px solid #2f4268;
  border-radius: 46px;
  background: #01050f;
  box-shadow: -8px 4px 28px rgba(30, 45, 90, 0.3);
}

.phone-key {
  position: absolute;
  left: -6px;
  width: 3px;
  border-radius: 2px 0 0 2px;
  background: #2f4268;
}

.key-a { top: 87px; height: 19px; }
.key-b { top: 121px; height: 37px; }
.key-c { top: 167px; height: 38px; }

.key-power {
  left: auto;
  right: -5px;
  top: 140px;
  width: 2px;
  height: 55px;
}

.screen {
  position: relative;
  height: 100%;
  border-radius: 36px;
  overflow: hidden;
  display: flex;
  flex-direction: column;
  background: linear-gradient(to bottom, #06183f, #0b2a58);
}

.island {
  position: absolute;
  left: 74px;
  top: 5px;
  width: 69px;
  height: 20px;
  border-radius: 10px;
  background: #01040c;
  display: flex;
  align-items: center;
  justify-content: space-between;
  padding: 0 7px;
}

.island i {
  width: 6px;
  height: 6px;
  border-radius: 50%;
  background: #0a1020;
}

.island .lens {
  background: #0c2242;
}

.status {
  position: absolute;
  right: 13px;
  top: 12px;
  display: flex;
  align-items: center;
  gap: 3px;
}

.wifi {
  width: 11px;
  height: 9px;
  fill: none;
  stroke: #fff;
  stroke-width: 2;
}

.wifi circle {
  fill: #fff;
  stroke: none;
}

.battery {
  width: 14px;
  height: 7px;
  border-radius: 1.5px;
  background: #fff;
}

.screen-head {
  height: 59px;
  flex: none;
  padding: 19px 0 0 14px;
}

.phone-burger {
  width: 14px;
  display: flex;
  flex-direction: column;
  gap: 4px;
}

.phone-burger i {
  display: block;
  height: 2px;
  background: #d5dbe8;
}

.phone-underline {
  display: block;
  width: 27px;
  height: 2px;
  margin-top: 11px;
  background: #1a78e8;
}

.sheet {
  flex: 1;
  background: #f9fafe;
  border-radius: 20px 20px 0 0;
  padding: 12px 13px 0 12px;
}

.phone-tabs {
  display: flex;
  gap: 5px;
}

.phone-tab {
  flex: 1;
  height: 36px;
  border: 1px solid #edf0f6;
  border-radius: 8px;
  background: #fbfcfe;
  color: #7b89a8;
  display: flex;
  align-items: center;
  justify-content: center;
}

.phone-tab.active {
  flex: none;
  width: 38px;
  border-color: #a9c9f6;
  background: #eef4fe;
  color: #0b62e8;
}

.phone-card {
  margin: 12px -1px 0;
  background: #fdfdff;
  border: 1px solid #eef0f6;
  border-radius: 12px;
}

.pc-first {
  margin-top: 13px;
  height: 83px;
  padding: 14px 10px 0 10px;
  display: flex;
  align-items: flex-start;
}

.tile-md {
  width: 30px;
  height: 31px;
  border-radius: 6px;
}

.pc-text {
  flex: 1;
  padding: 5px 0 0 13px;
}

.pc-text .bar {
  height: 6px;
  background: #cfd5e1;
}

.pc-a { width: 83px; }
.pc-b { width: 63px; margin-top: 10px; }
.pc-c { width: 103px; }
.pc-first .pc-c { margin-top: 17px; background: #dbdfe8; }
.pc-d { width: 88px; margin-top: 11px; }

.pc-dot {
  width: 8px;
  height: 8px;
  flex: none;
  margin-top: 2px;
  border-radius: 50%;
}

.pc-dot-blue { background: #9cc2f8; }
.pc-dot-green { background: #7fca8f; margin-top: 0; }

.pc-steps {
  height: 86px;
  padding: 14px 10px 0;
}

.pc-head {
  display: flex;
  align-items: center;
  justify-content: space-between;
}

.pc-title { width: 45px; height: 6px; background: #cdd3e0; }
.pc-title-long { width: 78px; height: 6px; background: #cdd3e0; }

.pc-chevron {
  width: 6px;
  height: 10px;
  margin-right: 2px;
  color: #8d9ab5;
  stroke-width: 2.4;
}

.pc-steprow {
  margin: 17px 1px 0 5px;
  display: flex;
  align-items: center;
}

.mini-dot {
  width: 24px;
  height: 24px;
  flex: none;
  border-radius: 50%;
  display: flex;
  align-items: center;
  justify-content: center;
  color: #fff;
}

.mini-line {
  flex: 1;
  margin: 0 2px;
  border-top: 1px dashed #7a8cb5;
}

.mini-labels {
  margin: 13px 0 0 1px;
  display: grid;
  grid-template-columns: 49.5px 51.5px 52px 33px;
}

.mini-labels .bar {
  width: 32px;
  height: 5px;
  background: #dfe3eb;
}

.pc-file {
  margin-top: 13px;
  height: 97px;
  padding: 18px 10px 0;
}

.pc-filerow {
  margin-top: 19px;
  display: flex;
  align-items: flex-start;
}

.phone-tiles {
  margin-top: 19px;
  display: grid;
  grid-template-columns: repeat(3, 60px);
  column-gap: 10.5px;
}

.phone-tile {
  height: 54px;
  border: 1px solid #eff1f6;
  border-radius: 12px;
  background: #fafbfe;
  color: #7688a8;
  display: flex;
  align-items: center;
  justify-content: center;
}

.phone-tile .ico {
  stroke-width: 1.5;
}
```
